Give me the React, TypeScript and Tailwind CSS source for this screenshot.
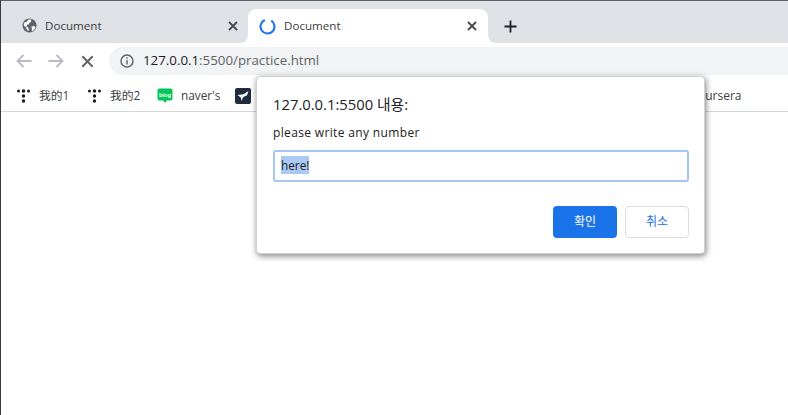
import type { ReactNode } from "react";

const uiFont = "font-['Open_Sans','Noto_Sans_CJK_KR',sans-serif]";

const CloseIcon = ({ size = 10, color = "#45484c", width = 1.8 }: { size?: number; color?: string; width?: number }) => (
  <svg width={size} height={size} viewBox="0 0 10 10" fill="none" stroke={color} strokeWidth={width}>
    <path d="M1 1 L9 9 M9 1 L1 9" />
  </svg>
);

const Globe = () => (
  <svg className="-translate-y-[1px]" width="15" height="15" viewBox="0 0 16 16">
    <circle cx="8" cy="8" r="7.5" fill="#5f6368" />
    <path d="M2 5 L5 4 L7 1.5 L10 1.5 L9.5 4 L7.5 5.5 L7.5 7 L5.5 7 L4.5 9 L7 10.5 L7 14 L5.5 13 L4.5 10.5 L2 8 Z" fill="#fff" />
    <path d="M10 9 L13 8.5 L14.5 10 L12 13.5 L10.5 14 L10.5 11.5 Z" fill="#fff" />
  </svg>
);

const Spinner = () => (
  <svg width="17" height="17" viewBox="0 0 18 18" fill="none">
    <path d="M6.2 2.2 A7.4 7.4 0 1 0 13 2.8" stroke="#1a73e8" strokeWidth="2.2" />
  </svg>
);

const DotsIcon = () => (
  <svg width="13" height="14" viewBox="0 0 13 14" fill="#1b1b1b">
    <circle cx="1.5" cy="2" r="1.5" />
    <circle cx="6.5" cy="2" r="1.8" />
    <circle cx="11.5" cy="2" r="1.5" />
    <circle cx="6.5" cy="7" r="1.7" />
    <circle cx="6.5" cy="12" r="1.7" />
  </svg>
);

const BlogIcon = () => (
  <svg width="16" height="16" viewBox="0 0 16 16">
    <path d="M2.5 0.5 H13.5 A2 2 0 0 1 15.5 2.5 V10.5 A2 2 0 0 1 13.5 12.5 H9.8 L8 15 L6.2 12.5 H2.5 A2 2 0 0 1 0.5 10.5 V2.5 A2 2 0 0 1 2.5 0.5 Z" fill="#03c75a" />
    <text x="8" y="8.8" textAnchor="middle" fontSize="5.6" fontWeight="700" fill="#fff" fontFamily="Liberation Sans, sans-serif">blog</text>
  </svg>
);

const DarkIcon = () => (
  <svg width="16" height="16" viewBox="0 0 16 16">
    <rect width="16" height="16" rx="2" fill="#1f2a3c" />
    <path d="M2.5 7 L8.5 6.2 L13.5 3 L12 7.2 L8.5 9 L6 13 L6 9.8 Z" fill="#fff" />
  </svg>
);

const Bookmark = ({ icon, label, gap, width }: { icon: ReactNode; label: string; gap: string; width: string }) => (
  <div className={`flex items-center ${gap} ${width} shrink-0`}>
    {icon}
    <span className="text-[11.8px] leading-none text-[#3c4043] whitespace-nowrap">{label}</span>
  </div>
);

const TabFlare = ({ side }: { side: "left" | "right" }) => (
  <div className={`absolute bottom-0 h-[8px] w-[8px] bg-white ${side === "left" ? "left-[-8px]" : "right-[-8px]"}`}>
    <div className={`h-full w-full bg-[#dee1e6] ${side === "left" ? "rounded-br-[8px]" : "rounded-bl-[8px]"}`} />
  </div>
);

export default function App() {
  return (
    <div className={`relative flex h-[415px] w-[788px] flex-col overflow-hidden border-l border-[#3b3b3b] bg-white ${uiFont}`}>
      {/* tab strip */}
      <div className="flex h-[43px] items-end border-t border-[#5f6368] bg-[#dee1e6]">
        <div className="flex h-[34px] w-[247px] items-center pl-[21px] pr-[10px]">
          <Globe />
          <span className="ml-[8px] flex-1 text-[11.6px] text-[#3c4043]">Document</span>
          <CloseIcon />
        </div>
        <div className="relative flex h-[34px] w-[240px] items-center rounded-t-[8px] bg-white pl-[11px] pr-[11px]">
          <TabFlare side="left" />
          <Spinner />
          <span className="ml-[8px] flex-1 text-[11.6px] text-[#3c4043]">Document</span>
          <CloseIcon />
          <TabFlare side="right" />
        </div>
        <div className="ml-[16px] flex h-[34px] items-center">
          <svg width="13" height="13" viewBox="0 0 13 13" stroke="#202124" strokeWidth="1.8">
            <path d="M6.5 0.5 V12.5 M0.5 6.5 H12.5" />
          </svg>
        </div>
      </div>

      {/* toolbar */}
      <div className="flex h-[37px] items-center pb-[1px] pl-[15px]">
        <svg width="16" height="14" viewBox="0 0 16 14" fill="none" stroke="#b8bbbf" strokeWidth="1.8">
          <path d="M15.5 7 H1.5 M7.5 1 L1.5 7 L7.5 13" />
        </svg>
        <svg className="ml-[16px]" width="16" height="14" viewBox="0 0 16 14" fill="none" stroke="#b8bbbf" strokeWidth="1.8">
          <path d="M0.5 7 H14.5 M8.5 1 L14.5 7 L8.5 13" />
        </svg>
        <div className="ml-[17px]">
          <CloseIcon size={13} color="#5f6368" width={1.5} />
        </div>
        <div className="ml-[15px] flex h-[28px] flex-1 items-center rounded-l-[14px] bg-[#f1f3f4] pl-[11px]">
          <svg width="14" height="14" viewBox="0 0 14 14" fill="none" stroke="#5f6368" strokeWidth="1.4">
            <circle cx="7" cy="7" r="6" />
            <path d="M7 6 V10.5 M7 3.3 V4.8" />
          </svg>
          <span className="ml-[9px] text-[13.3px] text-[#5f6368]">
            <span className="text-[#202124]">127.0.0.1</span>:5500/practice.html
          </span>
        </div>
      </div>

      {/* bookmarks */}
      <div className="flex h-[32px] items-center border-b border-[#d4d6d9] pl-[16px]">
        <Bookmark icon={<DotsIcon />} label="我的1" gap="gap-[9px]" width="w-[71px]" />
        <Bookmark icon={<DotsIcon />} label="我的2" gap="gap-[9px]" width="w-[69px]" />
        <Bookmark icon={<BlogIcon />} label="naver's" gap="gap-[8px]" width="w-[78px]" />
        <Bookmark icon={<DarkIcon />} label="" gap="gap-0" width="w-[463px]" />
        <span className="text-[12px] leading-none text-[#3c4043]">oursera</span>
      </div>

      <div className="flex-1 bg-white" />

      {/* prompt dialog */}
      <div className="absolute left-[255px] top-[76px] h-[178px] w-[449px] rounded-[4px] border border-[#cfcfcf] bg-white px-[16px] pt-[17px] shadow-[1px_2px_6px_rgba(0,0,0,0.5)]">
        <div className="text-[14.8px] leading-[20px] text-[#202124]">127.0.0.1:5500 내용:</div>
        <div className="mt-[10px] text-[12px] leading-[18px] tracking-[0.35px] text-[#202124]">please write any number</div>
        <div className="mt-[8px] flex h-[32px] w-[416px] items-center rounded-[3px] border-2 border-[#a6c6f2] pb-[2px] pl-[6px]">
          <span className="bg-[#abc9f5] text-[11.8px] leading-[18px] text-[#202124]">here!</span>
        </div>
        <div className="mt-[24px] flex w-[416px] justify-end gap-[8px]">
          <button className="h-[32px] w-[64px] rounded-[4px] bg-[#1a73e8] text-[12px] text-white">확인</button>
          <button className="h-[32px] w-[64px] rounded-[4px] border border-[#dadce0] bg-white text-[12px] text-[#1a73e8]">취소</button>
        </div>
      </div>
    </div>
  );
}
